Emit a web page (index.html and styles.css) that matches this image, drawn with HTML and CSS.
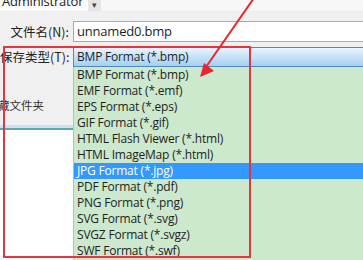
FILE: index.html
```html
<!DOCTYPE html>
<html lang="zh-CN">
<head>
    <meta charset="UTF-8">
    <title>保存为</title>
    <link rel="stylesheet" href="styles.css">
</head>
<body>
    <div class="topo">
        <div class="usuario"><span>Administrator</span></div>
        <div class="seta-menu">&#9662;</div>
    </div>

    <div class="campo">
        <label class="rotulo">文件名(N):</label>
        <div class="entrada">unnamed0.bmp</div>
    </div>

    <div class="tipos">
        <div class="lado">
            <div class="lado-cinza">
                <div class="rotulo">保存类型(T):</div>
                <div class="oculto">藏文件夹</div>
            </div>
            <div class="lado-linha"></div>
        </div>
        <div class="seletor">
            <div class="selecionado">BMP Format (*.bmp)</div>
            <ul class="opcoes">
                <li>BMP Format (*.bmp)</li>
                <li>EMF Format (*.emf)</li>
                <li>EPS Format (*.eps)</li>
                <li>GIF Format (*.gif)</li>
                <li>HTML Flash Viewer (*.html)</li>
                <li>HTML ImageMap (*.html)</li>
                <li class="ativo">JPG Format (*.jpg)</li>
                <li>PDF Format (*.pdf)</li>
                <li>PNG Format (*.png)</li>
                <li>SVG Format (*.svg)</li>
                <li>SVGZ Format (*.svgz)</li>
                <li>SWF Format (*.swf)</li>
            </ul>
        </div>
    </div>

    <!-- marcação vermelha por cima da captura -->
    <div class="moldura"></div>
    <svg class="flecha" width="363" height="260" viewBox="0 0 363 260">
        <line x1="254" y1="-2" x2="206" y2="67" stroke="#e8262e" stroke-width="2"/>
        <polygon points="200,77 204,63 214,71" fill="#e8262e"/>
    </svg>
</body>
</html>
```

FILE: styles.css
```css
body {
    margin: 0;
    width: 363px;
    height: 260px;
    overflow: hidden;
    background-color: #f0f0f0;
    font-family: "Open Sans", "Noto Sans CJK SC", sans-serif;
    font-size: 12px;
    letter-spacing: -0.2px;
    color: #1e1e1e;
    position: relative;
}

.topo {
    height: 11px;
    display: flex;
    background-color: #f7f7f7;
    border-bottom: 1px solid #ececec;
}

.usuario {
    width: 88px;
    background-color: #fbfbfb;
    overflow: hidden;
}

.usuario span {
    display: block;
    margin-top: -8px;
    padding-left: 2px;
    line-height: 18px;
    font-size: 13px;
}

.seta-menu {
    width: 13px;
    background-color: #e6e6e6;
    font-size: 9px;
    line-height: 9px;
    text-align: center;
    color: #444;
}

.campo {
    display: flex;
    align-items: center;
    margin-top: 9px;
    height: 21px;
}

.rotulo {
    width: 69px;
    padding-right: 4px;
    text-align: right;
    font-family: "Noto Sans CJK SC", sans-serif;
    font-size: 12.5px;
    letter-spacing: 0;
    white-space: nowrap;
    color: #222;
}

.entrada {
    flex: 1;
    height: 21px;
    box-sizing: border-box;
    background-color: white;
    border: 1px solid #a9a9a9;
    border-right: none;
    padding-left: 3px;
    line-height: 19px;
    font-size: 13px;
}

.tipos {
    display: flex;
    margin-top: 5px;
}

.lado {
    width: 73px;
    display: flex;
    flex-direction: column;
    background-color: white;
}

.lado-cinza {
    height: 78px;
    background-color: #f0f0f0;
}

.lado-cinza .rotulo {
    height: 20px;
    line-height: 20px;
}

.oculto {
    margin-top: 30px;
    margin-left: -2px;
    font-family: "Noto Sans CJK SC", sans-serif;
    font-size: 11.5px;
    letter-spacing: 0;
    line-height: 16px;
    color: #333;
}

.lado-linha {
    height: 3px;
    background-color: #cfe2f2;
    border-bottom: 2px solid #5aa7b8;
}

.seletor {
    flex: 1;
}

.selecionado {
    height: 20px;
    box-sizing: border-box;
    border: 1px solid #4a8ac0;
    border-right: none;
    background: linear-gradient(#eaf4fd, #c9e3f8 45%, #a5cff0);
    padding-left: 3px;
    line-height: 18px;
}

.opcoes {
    list-style: none;
    margin: 0;
    padding: 0;
    height: 200px;
    background-color: #cce8cd;
    border-left: 1px solid #a9c9ad;
}

.opcoes li {
    height: 16px;
    line-height: 16px;
    padding-left: 3px;
    white-space: nowrap;
}

.opcoes li.ativo {
    background-color: #3399ff;
    color: white;
}

.moldura {
    position: absolute;
    left: 3px;
    top: 46px;
    width: 248px;
    height: 212px;
    box-sizing: border-box;
    border: 2px solid #e6353d;
}

.flecha {
    position: absolute;
    left: 0;
    top: 0;
}
```
